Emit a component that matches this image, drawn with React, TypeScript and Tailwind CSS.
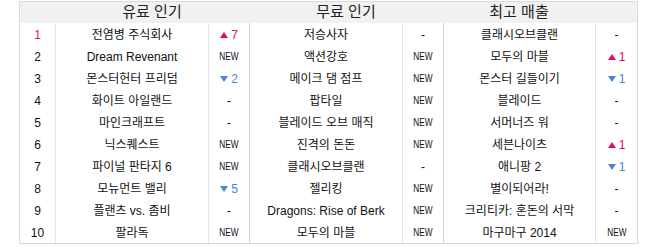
type Change = { kind: "up" | "down"; n: number } | "new" | "same";

type Entry = { name: string; change: Change };

const paid: Entry[] = [
  { name: "전염병 주식회사", change: { kind: "up", n: 7 } },
  { name: "Dream Revenant", change: "new" },
  { name: "몬스터헌터 프리덤", change: { kind: "down", n: 2 } },
  { name: "화이트 아일랜드", change: "same" },
  { name: "마인크래프트", change: "same" },
  { name: "닉스퀘스트", change: "new" },
  { name: "파이널 판타지 6", change: "new" },
  { name: "모뉴먼트 밸리", change: { kind: "down", n: 5 } },
  { name: "플랜츠 vs. 좀비", change: "same" },
  { name: "팔라독", change: "new" },
];

const free: Entry[] = [
  { name: "저승사자", change: "same" },
  { name: "액션강호", change: "new" },
  { name: "메이크 댐 점프", change: "new" },
  { name: "팝타일", change: "new" },
  { name: "블레이드 오브 매직", change: "new" },
  { name: "진격의 돈돈", change: "new" },
  { name: "클래시오브클랜", change: "same" },
  { name: "젤리킹", change: "new" },
  { name: "Dragons: Rise of Berk", change: "new" },
  { name: "모두의 마블", change: "new" },
];

const gross: Entry[] = [
  { name: "클래시오브클랜", change: "same" },
  { name: "모두의 마블", change: { kind: "up", n: 1 } },
  { name: "몬스터 길들이기", change: { kind: "down", n: 1 } },
  { name: "블레이드", change: "same" },
  { name: "서머너즈 워", change: "same" },
  { name: "세븐나이츠", change: { kind: "up", n: 1 } },
  { name: "애니팡 2", change: { kind: "down", n: 1 } },
  { name: "별이되어라!", change: "same" },
  { name: "크리티카: 혼돈의 서막", change: "same" },
  { name: "마구마구 2014", change: "new" },
];

const ChangeCell = ({ change }: { change: Change }) => {
  if (change === "new") {
    return <span className="inline-block scale-x-75 text-[11px] leading-none">NEW</span>;
  }
  if (change === "same") {
    return <span>-</span>;
  }
  const up = change.kind === "up";
  return (
    <span className={`flex items-center gap-[3px] ${up ? "text-[#e8086b]" : "text-[#4a86d4]"}`}>
      <svg width="8" height="6" viewBox="0 0 8 6">
        {up ? <polygon points="4,0 8,6 0,6" fill="currentColor" /> : <polygon points="0,0 8,0 4,6" fill="currentColor" />}
      </svg>
      {change.n}
    </span>
  );
};

const App = () => {
  return (
    <div className="w-[660px] h-[247px] bg-white pt-px text-[12px] text-[#111]" style={{ fontFamily: '"Liberation Sans", "Noto Sans CJK KR", sans-serif' }}>
      <div className="ml-[19px] w-[619px] border border-[#dadada]">
        <div className="flex h-[21px] items-center bg-[#f1f1f1] text-[15px] text-[#222]">
          <div className="w-[35px]" />
          <div className="w-[194px] text-center">유료 인기</div>
          <div className="w-[194px] text-center">무료 인기</div>
          <div className="w-[152px] text-center">최고 매출</div>
          <div className="w-[42px]" />
        </div>
        {paid.map((p, i) => (
          <div key={i} className="flex h-[22px] items-center">
            <div className={`flex h-full w-[35px] items-center justify-center pt-px ${i === 0 ? "text-[#d4145a]" : ""}`}>{i + 1}</div>
            <div className="flex h-full w-[153px] items-center justify-center border-l border-[#e6e6e6] pt-px">{p.name}</div>
            <div className="flex h-full w-[41px] items-center justify-center border-l border-[#e6e6e6] pt-px">
              <ChangeCell change={p.change} />
            </div>
            <div className="flex h-full w-[153px] items-center justify-center border-l border-[#d2d2d2] pt-px">{free[i].name}</div>
            <div className="flex h-full w-[41px] items-center justify-center border-l border-[#e6e6e6] pt-px">
              <ChangeCell change={free[i].change} />
            </div>
            <div className="flex h-full w-[152px] items-center justify-center border-l border-[#d2d2d2] pt-px">{gross[i].name}</div>
            <div className="flex h-full w-[42px] items-center justify-center border-l border-[#e6e6e6] pt-px">
              <ChangeCell change={gross[i].change} />
            </div>
          </div>
        ))}
      </div>
    </div>
  );
};

export default App;
